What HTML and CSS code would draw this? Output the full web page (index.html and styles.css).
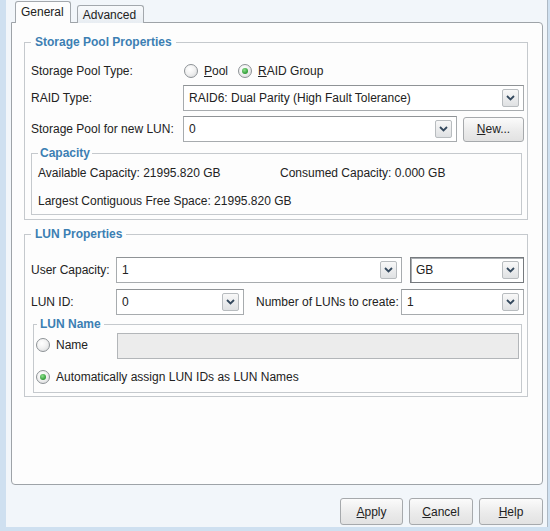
FILE: index.html
```html
<!DOCTYPE html>
<html>
<head>
<meta charset="utf-8">
<link rel="stylesheet" href="styles.css">
</head>
<body>
<div class="dialog">
  <div class="tabs">
    <div class="tab active">General</div>
    <div class="tab">Advanced</div>
  </div>
  <div class="panel">
    <fieldset class="group main">
      <legend>Storage Pool Properties</legend>
      <div class="row row-type">
        <span class="label">Storage Pool Type:</span>
        <span class="radio"></span><span class="rlabel"><u>P</u>ool</span>
        <span class="radio on"></span><span class="rlabel"><u>R</u>AID Group</span>
      </div>
      <div class="row row-raid">
        <span class="label">RAID Type:</span>
        <div class="select grow">
          <span class="value">RAID6: Dual Parity (High Fault Tolerance)</span>
          <span class="drop"><svg width="9" height="6" viewBox="0 0 9 6"><path d="M1 1 L4.5 4.5 L8 1" fill="none" stroke="#34495e" stroke-width="1.8"/></svg></span>
        </div>
      </div>
      <div class="row row-pool">
        <span class="label">Storage Pool for new LUN:</span>
        <div class="select grow">
          <span class="value">0</span>
          <span class="drop"><svg width="9" height="6" viewBox="0 0 9 6"><path d="M1 1 L4.5 4.5 L8 1" fill="none" stroke="#34495e" stroke-width="1.8"/></svg></span>
        </div>
        <button class="btn new"><u>N</u>ew...</button>
      </div>
      <fieldset class="group capacity">
        <legend>Capacity</legend>
        <div class="cap-row">
          <span>Available Capacity: 21995.820 GB</span>
          <span>Consumed Capacity: 0.000 GB</span>
        </div>
        <div class="cap-row second">
          <span class="wide">Largest Contiguous Free Space: 21995.820 GB</span>
        </div>
      </fieldset>
    </fieldset>

    <fieldset class="group lun">
      <legend>LUN Properties</legend>
      <div class="row">
        <span class="label short">User Capacity:</span>
        <div class="select cap-select">
          <span class="value">1</span>
          <span class="drop"><svg width="9" height="6" viewBox="0 0 9 6"><path d="M1 1 L4.5 4.5 L8 1" fill="none" stroke="#34495e" stroke-width="1.8"/></svg></span>
        </div>
        <div class="select unit-select focused">
          <span class="value">GB</span>
          <span class="drop"><svg width="9" height="6" viewBox="0 0 9 6"><path d="M1 1 L4.5 4.5 L8 1" fill="none" stroke="#34495e" stroke-width="1.8"/></svg></span>
        </div>
      </div>
      <div class="row row-id">
        <span class="label short">LUN ID:</span>
        <div class="select id-select">
          <span class="value">0</span>
          <span class="drop"><svg width="9" height="6" viewBox="0 0 9 6"><path d="M1 1 L4.5 4.5 L8 1" fill="none" stroke="#34495e" stroke-width="1.8"/></svg></span>
        </div>
        <span class="label count-label">Number of LUNs to create:</span>
        <div class="select grow">
          <span class="value">1</span>
          <span class="drop"><svg width="9" height="6" viewBox="0 0 9 6"><path d="M1 1 L4.5 4.5 L8 1" fill="none" stroke="#34495e" stroke-width="1.8"/></svg></span>
        </div>
      </div>
      <fieldset class="group lunname">
        <legend>LUN Name</legend>
        <div class="row name-row">
          <span class="name-opt"><span class="radio"></span><span class="rlabel">Name</span></span>
          <div class="textbox"></div>
        </div>
        <div class="row auto-row">
          <span class="radio on"></span><span class="rlabel">Automatically assign LUN IDs as LUN Names</span>
        </div>
      </fieldset>
    </fieldset>
  </div>
  <div class="footer">
    <button class="btn foot"><u>A</u>pply</button>
    <button class="btn foot"><u>C</u>ancel</button>
    <button class="btn foot"><u>H</u>elp</button>
  </div>
</div>
</body>
</html>
```

FILE: styles.css
```css
* { box-sizing: border-box; }

html, body {
  margin: 0;
  padding: 0;
}

body {
  width: 550px;
  height: 531px;
  background: #cfe0f0;
  font-family: "Liberation Sans", Arial, sans-serif;
  font-size: 12px;
  color: #222;
  overflow: hidden;
}

.dialog {
  margin-left: 6px;
  width: 542px;
  height: 527px;
  background: #f2f6fa;
  border-right: 1px solid #aeb9c4;
  padding: 2px 4px 0 5px;
}

.tabs {
  display: flex;
  align-items: flex-end;
  gap: 6px;
  padding-left: 4px;
  height: 21px;
  margin-bottom: -1px;
  position: relative;
  z-index: 1;
}

.tab {
  height: 18px;
  padding: 0 7px 0 5px;
  border: 1px solid #a3a8ad;
  border-bottom: none;
  border-radius: 3px 3px 0 0;
  background: linear-gradient(#f8fafc, #e8edf2);
  line-height: 18px;
  color: #222;
}

.tab.active {
  height: 22px;
  background: #fdfdfd;
  padding: 0 6px 0 5px;
  line-height: 20px;
}

.panel {
  height: 463px;
  background: #fdfdfd;
  border: 1px solid #9ea3a8;
  border-radius: 0 4px 4px 4px;
  padding: 12px 14px 0 12px;
}

.group {
  margin: 0;
  border: 1px solid #c5c9cd;
  min-width: 0;
}

.group legend {
  font-weight: bold;
  font-size: 12px;
  line-height: 14px;
  color: #3c7fb3;
  padding: 0 4px;
}

.main {
  padding: 11px 3px 4px 6px;
}

.row {
  display: flex;
  align-items: center;
  height: 26px;
}

.row-type {
  height: 22px;
}

.row-raid {
  margin-top: 3px;
}

.row-pool {
  margin-top: 5px;
}

.label {
  width: 152px;
  flex: none;
  white-space: nowrap;
}

.label.short {
  width: 85px;
}

.radio {
  flex: none;
  width: 14px;
  height: 14px;
  border-radius: 50%;
  border: 1px solid #8d9296;
  background: radial-gradient(circle at 40% 35%, #ffffff 0%, #f2f2f2 45%, #d4d6d8 100%);
  display: inline-flex;
  align-items: center;
  justify-content: center;
  margin-left: 1px;
}

.radio.on::after {
  content: "";
  width: 6px;
  height: 6px;
  border-radius: 50%;
  background: radial-gradient(circle at 40% 35%, #8de08c 0%, #2f9b36 70%, #227a2a 100%);
}

.rlabel {
  margin-left: 6px;
  margin-right: 9px;
  white-space: nowrap;
}

.select {
  height: 26px;
  border: 1px solid #a7abae;
  border-top-color: #8f9396;
  background: #fff;
  display: flex;
  align-items: center;
  justify-content: space-between;
  padding: 0 4px 0 5px;
}

.select.grow {
  flex: 1;
}

.select .value {
  white-space: nowrap;
}

.drop {
  flex: none;
  width: 17px;
  height: 18px;
  border: 1px solid #b8bcbf;
  border-radius: 2px;
  background: linear-gradient(#f8f8f8, #dfe1e3);
  display: flex;
  align-items: center;
  justify-content: center;
}

.btn {
  font-family: "Liberation Sans", Arial, sans-serif;
  font-size: 12px;
  color: #222;
  border: 1px solid #a6a9ac;
  border-radius: 3px;
  background: linear-gradient(#fbfbfb, #ebebeb 55%, #e2e2e2);
  padding: 0;
}

.new {
  width: 61px;
  height: 25px;
  margin-left: 6px;
}

.capacity {
  margin: 4px 2px 0 0;
  padding: 3px 4px 3px 6px;
}

.capacity legend {
  padding: 0 2px;
}

.cap-row {
  display: grid;
  grid-template-columns: 242px 1fr;
  height: 20px;
  align-items: center;
  white-space: nowrap;
}

.cap-row .wide {
  grid-column: 1 / -1;
}

.cap-row.second {
  margin-top: 8px;
}

.lun {
  margin-top: 7px;
  padding: 16px 3px 3px 6px;
}

.cap-select {
  width: 286px;
  flex: none;
}

.unit-select {
  flex: 1;
  margin-left: 8px;
}

.select.focused {
  border: 1px solid #767a7e;
  box-shadow: inset 1px 1px 0 #a9adb1;
}

.row-id {
  margin-top: 6px;
}

.id-select {
  width: 128px;
  flex: none;
}

.count-label {
  width: 145px;
  margin-left: 12px;
}

.lunname {
  margin: 2px 2px 0 2px;
  padding: 2px 2px 4px 1px;
}

.lunname legend {
  padding: 0 3px;
  margin-left: 2px;
}

.name-opt {
  width: 82px;
  flex: none;
  display: flex;
  align-items: center;
  margin-top: -2px;
}

.textbox {
  flex: 1;
  height: 26px;
  background: #ececec;
  border: 1px solid #b3b6b9;
}

.auto-row {
  height: 22px;
  margin-top: 7px;
}

.footer {
  display: flex;
  justify-content: flex-end;
  gap: 6px;
  margin-top: 13px;
}

.btn.foot {
  width: 64px;
  height: 27px;
}

.btn.foot:first-child {
  width: 63px;
}
```
